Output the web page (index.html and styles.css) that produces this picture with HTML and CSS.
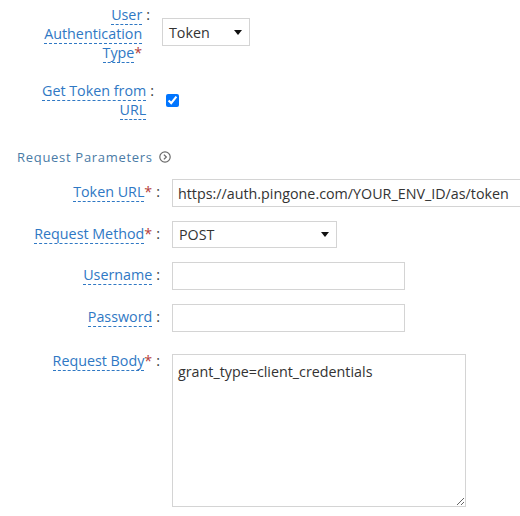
FILE: index.html
```html
<!DOCTYPE html>
<html>
<head>
<meta charset="utf-8">
<link rel="stylesheet" href="styles.css">
</head>
<body>
<div class="form">
  <div class="sec sec1">
    <div class="row row-auth">
      <div class="lab lab-tight"><span class="txt"><span class="u">User Authentication Type</span><span class="req">*</span></span><span class="colon">:</span></div>
      <div class="select sel-token"><span class="val">Token</span><span class="caret"></span></div>
    </div>
    <div class="row row-check">
      <div class="lab"><span class="txt"><span class="u">Get Token from URL</span></span><span class="colon">:</span></div>
      <input type="checkbox" class="chk" checked>
    </div>
  </div>

  <div class="sec-title">Request Parameters <svg class="sec-icon" width="12" height="12" viewBox="0 0 12 12"><circle cx="6" cy="6" r="5.2" fill="none" stroke="#6b6b6b" stroke-width="1.2"/><path d="M4.9 3.6 L7.3 6 L4.9 8.4" fill="none" stroke="#6b6b6b" stroke-width="1.3"/></svg></div>

  <div class="sec sec2">
    <div class="row">
      <div class="lab"><span class="txt"><span class="u">Token URL</span><span class="req">*</span></span><span class="colon">:</span></div>
      <div class="input in-url">https://auth.pingone.com/YOUR_ENV_ID/as/token</div>
    </div>
    <div class="row">
      <div class="lab"><span class="txt"><span class="u">Request Method</span><span class="req">*</span></span><span class="colon">:</span></div>
      <div class="select sel-method"><span class="val">POST</span><span class="caret"></span></div>
    </div>
    <div class="row">
      <div class="lab"><span class="txt"><span class="u">Username</span></span><span class="colon">:</span></div>
      <div class="input in-short"></div>
    </div>
    <div class="row">
      <div class="lab"><span class="txt"><span class="u">Password</span></span><span class="colon">:</span></div>
      <div class="input in-short"></div>
    </div>
    <div class="row row-body">
      <div class="lab"><span class="txt"><span class="u">Request Body</span><span class="req">*</span></span><span class="colon">:</span></div>
      <textarea class="area">grant_type=client_credentials</textarea>
    </div>
  </div>
</div>
</body>
</html>
```

FILE: styles.css
```css
html, body {
  margin: 0;
  padding: 0;
  background: #fff;
}
body {
  font-family: "Open Sans", "Noto Sans", sans-serif;
  font-size: 14.3px;
  line-height: 19px;
  color: #333;
  overflow: hidden;
}
.form {
  padding-top: 5px;
}
.sec {
  display: flex;
  flex-direction: column;
}
.sec1 {
  gap: 19px;
}
.sec2 {
  gap: 14px;
}
.row {
  display: flex;
  align-items: flex-start;
}
.sec1 .row {
  align-items: center;
}
.lab {
  display: flex;
  justify-content: flex-end;
  align-items: flex-start;
  flex: none;
  box-sizing: border-box;
  white-space: nowrap;
}
.sec1 .lab {
  width: 154px;
  margin-right: 8px;
  white-space: normal;
}
.sec1 .txt {
  max-width: 106px;
}
.sec1 .lab-tight {
  padding-right: 4px;
}
.sec2 .lab {
  width: 160px;
  margin-right: 12px;
  padding-top: 3px;
}
.txt {
  text-align: right;
}
.u {
  color: #2f78c4;
  border-bottom: 1px dashed #2f78c4;
}
.req {
  color: #b5403a;
}
.colon {
  margin-left: 4px;
  color: #333;
}
.select, .input {
  box-sizing: border-box;
  height: 28px;
  border: 1px solid #d4d4d4;
  background: #fff;
  display: flex;
  align-items: center;
  color: #333;
  white-space: nowrap;
  flex: none;
}
.select {
  justify-content: space-between;
  padding: 0 7px 0 6px;
}
.input {
  padding: 0 6px 0 5px;
}
.caret {
  width: 0;
  height: 0;
  border-top: 5px solid #111;
  border-left: 4px solid transparent;
  border-right: 4px solid transparent;
}
.sel-token {
  width: 88px;
  margin-bottom: 3px;
}
.sel-method {
  width: 165px;
  height: 27px;
}
.in-url {
  width: 360px;
  overflow: hidden;
}
.in-short {
  width: 233px;
}
.chk {
  margin: 3px 3px 3px 4px;
  width: 13px;
  height: 13px;
}
.sec-title {
  margin: 29px 0 13px 17px;
  font-size: 13px;
  line-height: 18px;
  letter-spacing: 0.7px;
  color: #4a7ba6;
  display: flex;
  align-items: center;
  gap: 6px;
}
.sec-icon {
  display: block;
}
.row-body {
  margin-top: 0;
}
.row-body .lab {
  padding-top: 5px;
}
.area {
  box-sizing: border-box;
  width: 294px;
  height: 153px;
  margin: 8px 0 0 0;
  border: 1px solid #d4d4d4;
  padding: 7px 5px;
  font-family: "Open Sans", "Noto Sans", sans-serif;
  font-size: 14.3px;
  line-height: 19px;
  color: #333;
  flex: none;
}
```
